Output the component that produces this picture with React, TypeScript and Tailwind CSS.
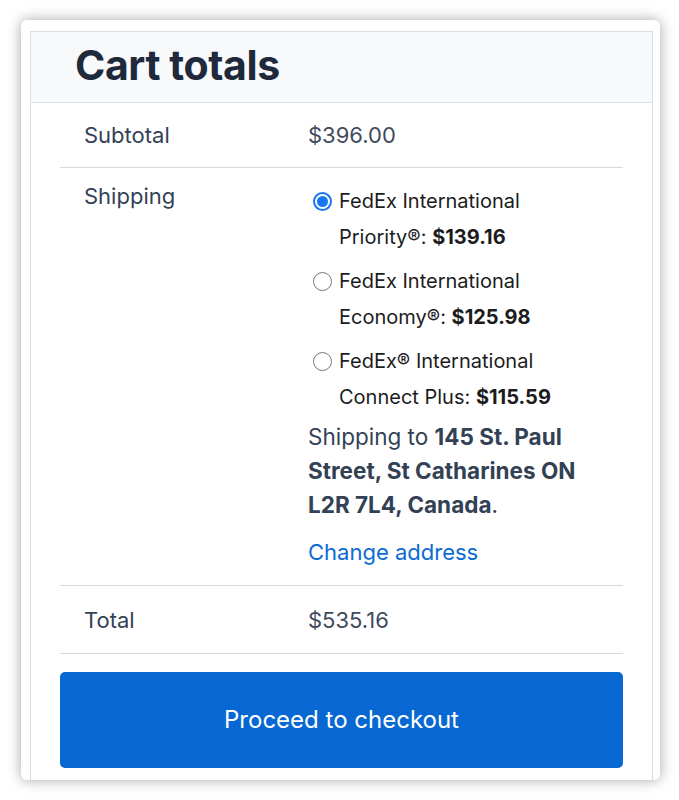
import { useState } from 'react';

const options = [
  { id: 'priority', name: 'FedEx International Priority®:', price: '$139.16' },
  { id: 'economy', name: 'FedEx International Economy®:', price: '$125.98' },
  { id: 'connect', name: 'FedEx® International Connect Plus:', price: '$115.59' },
];

function Radio({ checked }: { checked: boolean }) {
  if (checked) {
    return (
      <span className="mt-[9px] flex h-[19px] w-[19px] shrink-0 items-center justify-center rounded-full border-2 border-[#1877f2] bg-white">
        <span className="h-[11px] w-[11px] rounded-full bg-[#1877f2]" />
      </span>
    );
  }
  return <span className="mt-[9px] h-[19px] w-[19px] shrink-0 rounded-full border-[1.5px] border-[#7a7a7a] bg-white" />;
}

export default function App() {
  const [selected, setSelected] = useState('priority');

  return (
    <div className="min-h-screen bg-white pl-[21px] pt-[20px] font-['Inter',sans-serif]">
      <div className="h-[760px] w-[639px] overflow-hidden rounded-[6px] bg-white pl-[9px] pt-[11px] shadow-[0_0_14px_rgba(0,0,0,0.35)]">
        <div className="h-[800px] w-[623px] border border-[#d8dde3]">
          <div className="flex h-[71px] items-center border-b border-[#d8dde3] bg-[#f8f9fa] pb-[4px] pl-[44px]">
            <h2 className="text-[41px] font-bold leading-none tracking-[-0.01em] text-[#1e293b]">Cart totals</h2>
          </div>

          <div className="px-[29px]">
            <div className="flex border-b border-[#d5d9de] py-[18px] text-[22px] leading-[28px]">
              <div className="w-[248px] pl-[24px] text-[#334155]">Subtotal</div>
              <div className="flex-1 text-[#3f4b5c]">$396.00</div>
            </div>

            <div className="flex border-b border-[#d5d9de] pb-[16px] pt-[14px]">
              <div className="w-[248px] pl-[24px] text-[22px] leading-[28px] text-[#334155]">Shipping</div>
              <div className="flex-1 pr-[24px] pt-[1px]">
                <ul className="flex flex-col gap-[8px] pl-[5px]">
                  {options.map((o) => (
                    <li
                      key={o.id}
                      className="flex cursor-pointer gap-[7px]"
                      onClick={() => setSelected(o.id)}
                    >
                      <Radio checked={selected === o.id} />
                      <span className="w-[250px] text-[20px] leading-[36px] text-[#1c1c1e]">
                        {o.name} <strong className="font-bold">{o.price}</strong>
                      </span>
                    </li>
                  ))}
                </ul>
                <p className="mt-[5px] text-[22.5px] leading-[34px] text-[#334155]">
                  Shipping to <strong className="font-bold">145 St. Paul Street, St Catharines ON L2R 7L4, Canada</strong>.
                </p>
                <a href="#" className="mt-[13px] block text-[22px] leading-[34px] text-[#0b6bd6]">
                  Change address
                </a>
              </div>
            </div>

            <div className="flex border-b border-[#d5d9de] pb-[19px] pt-[20px] text-[22px] leading-[28px]">
              <div className="w-[248px] pl-[24px] text-[#334155]">Total</div>
              <div className="flex-1 text-[#3f4b5c]">$535.16</div>
            </div>

            <button className="mt-[18px] flex h-[96px] w-full items-center justify-center rounded-[5px] bg-[#0768d4] text-[24px] text-white">
              Proceed to checkout
            </button>
          </div>
        </div>
      </div>
    </div>
  );
}
